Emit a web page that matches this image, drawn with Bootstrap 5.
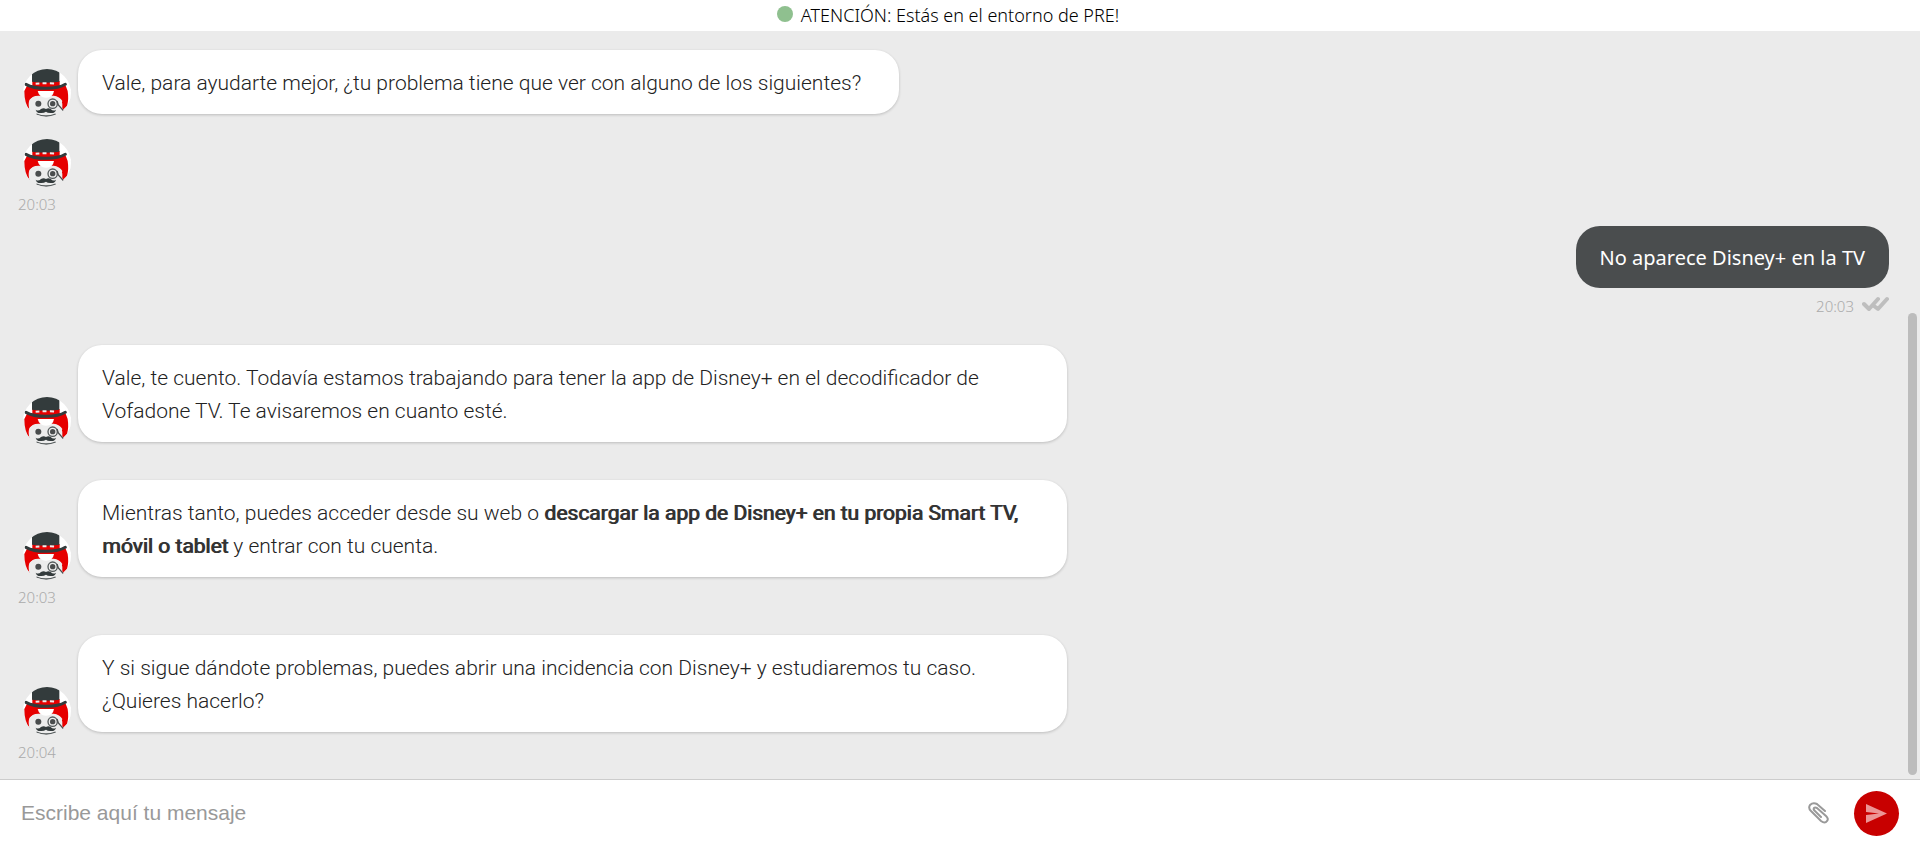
<!DOCTYPE html>
<html lang="es">
<head>
<meta charset="utf-8">
<meta name="viewport" content="width=device-width, initial-scale=1">
<title>Chat</title>
<link href="https://cdn.jsdelivr.net/npm/bootstrap@5.3.0/dist/css/bootstrap.min.css" rel="stylesheet">
<style>
  body { font-family: "Noto Sans", "Open Sans", sans-serif; background: #fff; color: #222; }
  .env-bar { height: 31px; padding-right: 24px; font-size: 18px; font-weight: 300; line-height: 31px; color: #000; }
  .env-dot { width: 16px; height: 16px; background: #8fc08f; margin-bottom: 4px; }
  .chat-log { background: #ebebeb; padding: 19px 31px 12px 18px; }
  .msg-row { gap: 7px; padding-left: 5px; }
  .avatar { width: 48px; height: 48px; margin-bottom: -3px; }
  .bubble { min-width: 44%; background: #fff; border-radius: 24px; padding: 17px 24px 14px; font-family: Roboto, sans-serif; font-size: 21px; font-weight: 300; line-height: 33px; box-shadow: 0 1px 3px rgba(0,0,0,.2); }
  .bubble-wide { width: 53%; }
  .bubble strong { font-weight: 400; color: #333; text-shadow: 1px 0 currentColor; }
  .bubble-user { min-width: 0; background: #4a4d4e; color: #fff; font-family: "Noto Sans", sans-serif; font-size: 20px; font-weight: 400; box-shadow: none; padding: 15px 24px 14px; margin-top: 12px; }
  .after-stamp { margin-top: 28px; }
  .after-bubble { margin-top: 38px; }
  .after-short { margin-top: 25px; }
  .stamp { font-size: 15px; font-weight: 300; line-height: 20px; color: #aaa; margin-top: 10px; }
  .stamp-user { margin-top: 8px; padding-bottom: 1px; }
  .thumb { right: 3px; top: 282px; bottom: 4px; width: 9px; background: #bcbcbc; }
  .composer { height: 67px; border-top: 1px solid #ccc; padding: 0 21px; }
  .composer input { font-family: "Liberation Sans", Arial, sans-serif; font-size: 21px; }
  .composer input::placeholder { color: #999; opacity: 1; }
  .send-btn { width: 45px; height: 45px; background: #c80000; }
</style>
</head>
<body class="d-flex flex-column vh-100 overflow-hidden">
<svg class="position-absolute" width="0" height="0" aria-hidden="true">
  <clipPath id="disc"><circle cx="72" cy="72" r="72"/></clipPath>
  <symbol id="bot" viewBox="0 0 144 144">
    <g clip-path="url(#disc)">
      <path fill="#fff" d="M0 0H144V66H0Z"/>
      <path fill="#fff" d="M130 60H144V90L134 106Z"/>
      <path fill="#e60000" d="M4 66L12 50H128L134 66Q138 92 132 110L119 123Q113 106 118 96Q110 82 92 80H46Q26 80 19 96Q16 110 20 124Q4 104 4 66Z"/>
      <path fill="#ececec" d="M20 124Q14 104 20 92Q28 80 68 80Q104 80 114 92L118 104V122L90 144H46Z"/>
      <path fill="#fff" d="M44 66H93Q90 86 69 86Q49 86 44 66Z"/>
      <path fill="#e60000" d="M28 36H110V60H28Z"/>
      <path fill="#333b3c" d="M27 0H109V38Q68 44 27 38Z"/>
      <path fill="none" stroke="#eee" stroke-width="6" stroke-dasharray="12 10" d="M38 44Q68 42 104 44"/>
      <path fill="none" stroke="#333b3c" stroke-width="9" stroke-linecap="round" d="M9 46Q30 58 69 58Q108 58 127 46"/>
      <circle cx="46" cy="104" r="9" fill="#4a4d4e"/>
      <circle cx="89" cy="104" r="8" fill="#4a4d4e"/>
      <circle cx="89" cy="104" r="14" fill="none" stroke="#555b5c" stroke-width="4"/>
      <path fill="none" stroke="#4a4d4e" stroke-width="4" d="M102 96L106 108 121 125"/>
      <path fill="#333b3c" d="M38 122Q46 128 54 120Q62 115 69 120Q76 115 83 120Q91 128 99 122Q96 134 82 132Q73 132 69 128Q64 132 55 132Q41 134 38 122Z"/>
      <path fill="none" stroke="#555b5c" stroke-width="4" d="M40 135Q69 147 98 135"/>
    </g>
  </symbol>
</svg>

<header class="env-bar d-flex justify-content-center align-items-center gap-2">
  <span class="env-dot rounded-circle"></span>
  <span>ATENCIÓN: Estás en el entorno de PRE!</span>
</header>

<main class="chat-log flex-grow-1 position-relative d-flex flex-column">
  <div class="msg-row d-flex align-items-end">
    <svg class="avatar flex-shrink-0"><use href="#bot"/></svg>
    <div class="bubble">Vale, para ayudarte mejor, ¿tu problema tiene que ver con alguno de los siguientes?</div>
  </div>
  <div class="msg-row d-flex after-short">
    <svg class="avatar flex-shrink-0"><use href="#bot"/></svg>
  </div>
  <div class="stamp">20:03</div>
  <div class="bubble bubble-user align-self-end">No aparece Disney+ en la TV</div>
  <div class="stamp stamp-user d-flex align-self-end align-items-start gap-2">20:03
    <svg width="27" height="17" viewBox="0 0 27 17" fill="none" stroke="#bebebe" stroke-width="4" stroke-linecap="round" stroke-linejoin="round" aria-label="Leído"><path d="M2 8L7 13 16 3M12 10L16 13 25 3"/></svg>
  </div>
  <div class="msg-row d-flex align-items-end after-stamp">
    <svg class="avatar flex-shrink-0"><use href="#bot"/></svg>
    <div class="bubble bubble-wide">Vale, te cuento. Todavía estamos trabajando para tener la app de Disney+ en el decodificador de Vofadone TV. Te avisaremos en cuanto esté.</div>
  </div>
  <div class="msg-row d-flex align-items-end after-bubble">
    <svg class="avatar flex-shrink-0"><use href="#bot"/></svg>
    <div class="bubble bubble-wide">Mientras tanto, puedes acceder desde su web o <strong>descargar la app de Disney+ en tu propia Smart TV, móvil o tablet</strong> y entrar con tu cuenta.</div>
  </div>
  <div class="stamp">20:03</div>
  <div class="msg-row d-flex align-items-end after-stamp">
    <svg class="avatar flex-shrink-0"><use href="#bot"/></svg>
    <div class="bubble bubble-wide">Y si sigue dándote problemas, puedes abrir una incidencia con Disney+ y estudiaremos tu caso. ¿Quieres hacerlo?</div>
  </div>
  <div class="stamp">20:04</div>
  <div class="thumb position-absolute rounded-pill"></div>
</main>

<form class="composer d-flex align-items-center">
  <input type="text" class="form-control border-0 shadow-none p-0 flex-grow-1" placeholder="Escribe aquí tu mensaje" aria-label="Escribe aquí tu mensaje">
  <button type="button" class="btn border-0 p-0 me-4 lh-1" aria-label="Adjuntar archivo">
    <svg width="22" height="22" viewBox="0 0 22 22" fill="none" stroke="#999" stroke-width="2" stroke-linecap="round"><path d="M17 9L9 2Q5 0 2 3Q0 6 3 9L13 19Q17 22 19 19Q21 17 18 14L9 6Q7 5 6 6Q5 8 7 9L13 15"/></svg>
  </button>
  <button type="submit" class="send-btn btn border-0 rounded-circle p-0 d-flex align-items-center justify-content-center flex-shrink-0" aria-label="Enviar">
    <svg width="21" height="19" viewBox="0 0 21 19" fill="#ec9595"><path d="M0 0L21 9.500 0 19V11L13 9.500 0 8Z"/></svg>
  </button>
</form>
<script src="https://cdn.jsdelivr.net/npm/bootstrap@5.3.0/dist/js/bootstrap.bundle.min.js"></script>
</body>
</html>
